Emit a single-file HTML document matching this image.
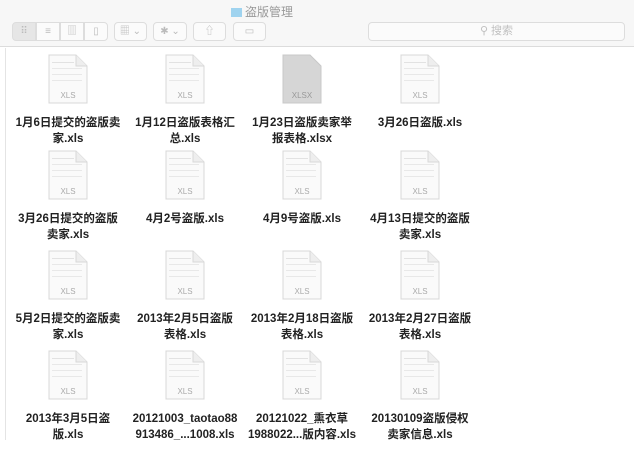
<!DOCTYPE html>
<html><head><meta charset="utf-8"><style>
*{margin:0;padding:0;box-sizing:border-box}
body{width:634px;height:452px;background:#fff;font-family:"Liberation Sans","Noto Sans CJK SC",sans-serif;position:relative;overflow:hidden}
.tb{position:absolute;left:0;top:0;width:634px;height:47px;background:#f7f7f7;border-bottom:1px solid #dcdcdc}
.title{position:absolute;top:3px;left:231px;font-size:12px;color:#9a9a9a}
.title i{display:inline-block;width:11px;height:9px;background:#9fd3ef;vertical-align:-1px;margin-right:3px}
.btn{position:absolute;top:22px;height:19px;border:1px solid #ddd;border-radius:4px;background:#fbfbfb;color:#bbb;font-size:10px;text-align:center;line-height:17px}
.seg{position:absolute;top:22px;height:19px;width:24px;border:1px solid #ddd;background:#fbfbfb;color:#bbb;font-size:10px;text-align:center;line-height:17px}
.search{position:absolute;top:22px;left:368px;width:257px;height:19px;border:1px solid #ddd;border-radius:4px;background:#fbfbfb;color:#c0c0c0;font-size:11px;text-align:center;line-height:17px}
.lb{position:absolute;left:5px;top:48px;width:1px;height:392px;background:#e4e4e4}
.item{position:absolute;width:120px;text-align:center}
.item svg{display:block;margin:0 auto}
.lab{font-size:11.5px;color:#222;line-height:16px;margin-top:11px;font-weight:bold}
</style></head><body>
<div class="tb">
<div class="title"><i></i>盗版管理</div>
<div class="seg" style="left:12px;border-radius:4px 0 0 4px;background:#e6e6e6">⠿</div>
<div class="seg" style="left:36px">≡</div>
<div class="seg" style="left:60px">▥</div>
<div class="seg" style="left:84px;border-radius:0 4px 4px 0">▯</div>
<div class="btn" style="left:114px;width:33px">▦ ⌄</div>
<div class="btn" style="left:153px;width:34px">✱ ⌄</div>
<div class="btn" style="left:193px;width:33px">⇧</div>
<div class="btn" style="left:233px;width:33px">▭</div>
<div class="search">⚲ 搜索</div>
</div>
<div class="lb"></div>

<svg width="0" height="0" style="position:absolute"><defs>
<symbol id="d" viewBox="0 0 40 50"><path d="M1 1H28L39 12V49H1Z" fill="#fafafa" stroke="#d8d8d8"/><path d="M28 1V12H39" fill="#eee" stroke="#d8d8d8"/><rect x="4" y="8" width="22" height="1" fill="#e2e2e2"/><rect x="4" y="14" width="30" height="1" fill="#e8e8e8"/><rect x="4" y="20" width="30" height="1" fill="#e8e8e8"/><rect x="4" y="26" width="30" height="1" fill="#e8e8e8"/><text x="20" y="44" text-anchor="middle" font-size="8" fill="#aaa" font-family="Liberation Sans">XLS</text></symbol>
</defs></svg>

<div class="item" style="left:8px;top:54px"><svg width="40" height="50"><use href="#d"/></svg><div class="lab">1月6日提交的盗版卖<br>家.xls</div></div>
<div class="item" style="left:125px;top:54px"><svg width="40" height="50"><use href="#d"/></svg><div class="lab">1月12日盗版表格汇<br>总.xls</div></div>
<div class="item" style="left:242px;top:54px"><svg width="40" height="50"><path d="M1 1H28L39 12V49H1Z" fill="#d6d6d6" stroke="#c8c8c8"/><text x="20" y="44" text-anchor="middle" font-size="8" fill="#999" font-family="Liberation Sans">XLSX</text></svg><div class="lab">1月23日盗版卖家举<br>报表格.xlsx</div></div>
<div class="item" style="left:360px;top:54px"><svg width="40" height="50"><use href="#d"/></svg><div class="lab">3月26日盗版.xls</div></div>

<div class="item" style="left:8px;top:150px"><svg width="40" height="50"><use href="#d"/></svg><div class="lab">3月26日提交的盗版<br>卖家.xls</div></div>
<div class="item" style="left:125px;top:150px"><svg width="40" height="50"><use href="#d"/></svg><div class="lab">4月2号盗版.xls</div></div>
<div class="item" style="left:242px;top:150px"><svg width="40" height="50"><use href="#d"/></svg><div class="lab">4月9号盗版.xls</div></div>
<div class="item" style="left:360px;top:150px"><svg width="40" height="50"><use href="#d"/></svg><div class="lab">4月13日提交的盗版<br>卖家.xls</div></div>

<div class="item" style="left:8px;top:250px"><svg width="40" height="50"><use href="#d"/></svg><div class="lab">5月2日提交的盗版卖<br>家.xls</div></div>
<div class="item" style="left:125px;top:250px"><svg width="40" height="50"><use href="#d"/></svg><div class="lab">2013年2月5日盗版<br>表格.xls</div></div>
<div class="item" style="left:242px;top:250px"><svg width="40" height="50"><use href="#d"/></svg><div class="lab">2013年2月18日盗版<br>表格.xls</div></div>
<div class="item" style="left:360px;top:250px"><svg width="40" height="50"><use href="#d"/></svg><div class="lab">2013年2月27日盗版<br>表格.xls</div></div>

<div class="item" style="left:8px;top:350px"><svg width="40" height="50"><use href="#d"/></svg><div class="lab">2013年3月5日盗<br>版.xls</div></div>
<div class="item" style="left:125px;top:350px"><svg width="40" height="50"><use href="#d"/></svg><div class="lab">20121003_taotao88<br>913486_...1008.xls</div></div>
<div class="item" style="left:242px;top:350px"><svg width="40" height="50"><use href="#d"/></svg><div class="lab">20121022_熏衣草<br>1988022...版内容.xls</div></div>
<div class="item" style="left:360px;top:350px"><svg width="40" height="50"><use href="#d"/></svg><div class="lab">20130109盗版侵权<br>卖家信息.xls</div></div>
</body></html>
